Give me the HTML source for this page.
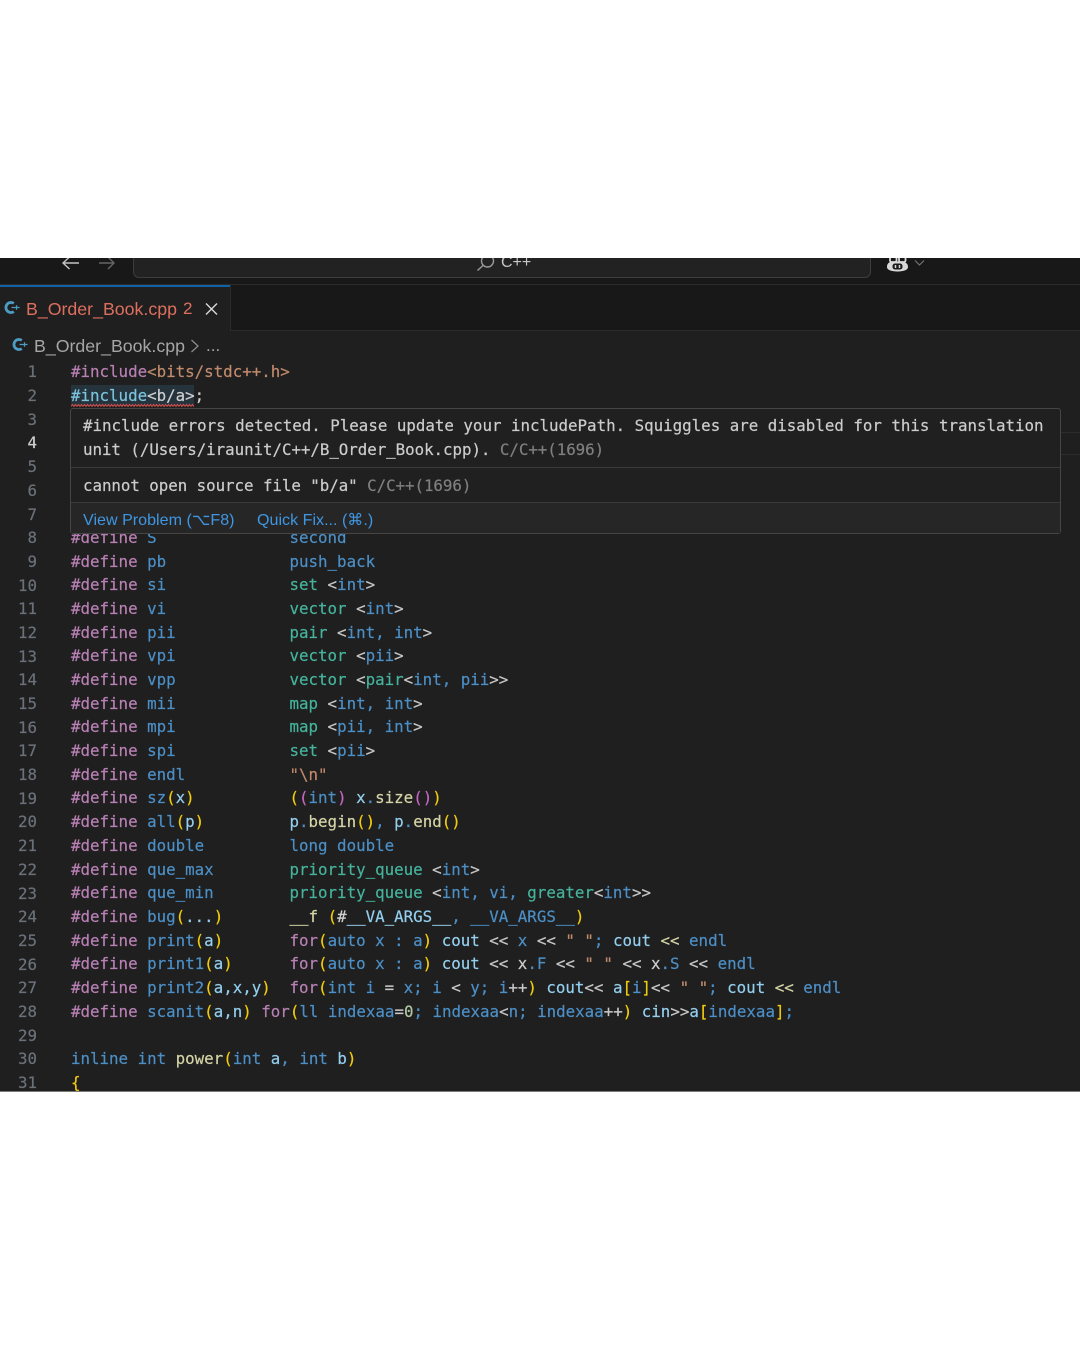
<!DOCTYPE html>
<html><head><meta charset="utf-8"><style>
html,body{margin:0;padding:0;background:#fff;width:1080px;height:1350px;overflow:hidden}
#p{position:relative;width:1080px;height:1350px;overflow:hidden;background:#fff}
#v{position:absolute;left:0;top:258px;width:1080px;height:833px;background:#1f1f1f;overflow:hidden;border-bottom:1px solid #7a7a7a}
.abs{position:absolute}
.code,.nums,.pop{font-family:"DejaVu Sans Mono","Liberation Mono",monospace;font-size:15.8px;-webkit-text-stroke:0.2px}
.code{position:absolute;left:71px;top:102.4px;line-height:23.68px;color:#c8c8c8}
.code div{height:23.68px;white-space:pre}
.nums{position:absolute;left:0;top:102.4px;width:37px;text-align:right;line-height:23.68px;color:#6b717a;white-space:pre}
.nums b{font-weight:normal;color:#d0d0d0}
.c1{display:inline-block;width:218.5px}
.k{color:#b880b4}.b{color:#4c8fc6}.t{color:#45b39c}.l{color:#93cfee}.y{color:#f2cc0c}.m{color:#c566c2}.s{color:#c08a6c}.f{color:#d4d4a6}.n{color:#b0c8a4}.w{color:#cfcfcf}
.sans{font-family:"Liberation Sans",Arial,sans-serif;white-space:pre}
.pop{position:absolute;left:70px;top:150px;width:989px;height:124px;background:#202020;border:1px solid #454545;border-radius:3px;color:#cccccc;line-height:24px;white-space:pre}
.pop .g{color:#7f7f7f}
.pop .ln{position:absolute;left:12px}
</style></head><body><div id="p"><div id="v">
<div class="abs" style="left:0;top:0;width:1080px;height:27px;background:#181818;border-bottom:1px solid #2b2b2b;box-sizing:border-box"></div>
<div class="abs" style="left:133px;top:-10px;width:736px;height:28px;background:#222;border:1px solid #3d3d3d;border-radius:6px"></div>
<svg class="abs" style="left:60px;top:-2px" width="60" height="18" fill="none" stroke-width="1.4"><path d="M3 7H19M9.5 1L3 7L9.5 13" stroke="#c4c4c4"/><path d="M39 7H54M48 1L54 7L48 13" stroke="#666"/></svg>
<svg class="abs" style="left:475px;top:-2px" width="24" height="18" fill="none" stroke="#9a9a9a" stroke-width="1.4"><circle cx="12.5" cy="5" r="6"/><path d="M8 9.5L2.5 14.5"/></svg>
<div class="abs sans" style="left:501px;top:-5px;font-size:16px;line-height:20px;color:#c8c8c8">C++</div>
<svg class="abs" style="left:885px;top:-4px" width="44" height="20" fill="none"><path d="M2 13C2 8.5 5 7 12 7.5C19 7 23 8.5 23 13C23 16.5 17 17.5 12.5 17.5C8 17.5 2 16.5 2 13Z" fill="#d8d8d8"/><rect x="5" y="2.5" width="6.5" height="5.5" rx="1.5" stroke="#d8d8d8" stroke-width="1.8"/><rect x="14" y="2.5" width="6.5" height="5.5" rx="1.5" stroke="#d8d8d8" stroke-width="1.8"/><rect x="7.5" y="9.5" width="10" height="6" rx="2.5" fill="#1a1a1a"/><path d="M10.5 11V14M14.5 11V14" stroke="#d8d8d8" stroke-width="1.5"/><path d="M30 6.5L34.5 11L39 6.5" stroke="#777" stroke-width="1.1"/></svg>
<div class="abs" style="left:0;top:27px;width:1080px;height:46px;background:#181818;border-bottom:1px solid #2b2b2b;box-sizing:border-box"></div>
<div class="abs" style="left:0;top:27px;width:231px;height:46px;background:#1f1f1f;border-right:1px solid #2b2b2b;box-sizing:border-box"></div>
<div class="abs" style="left:0;top:27px;height:2px;background:#0f62a6;width:230px"></div>
<svg class="abs" style="left:3px;top:42px" width="18" height="16" fill="none"><path d="M10.8 3.4A5 5 0 1 0 10.8 11.6" stroke="#4d9cc4" stroke-width="2.8"/><path d="M8.5 7.5H16.5M13.5 5.2V9.8" stroke="#4d9cc4" stroke-width="1.2"/></svg>
<div class="abs sans" style="left:26px;top:40px;font-size:17.75px;line-height:22px;color:#dd6f5f">B_Order_Book.cpp</div>
<div class="abs sans" style="left:183px;top:40px;font-size:17px;line-height:22px;color:#dd6f5f">2</div>
<svg class="abs" style="left:204px;top:44px" width="15" height="14" fill="none" stroke="#d8d8d8" stroke-width="1.4"><path d="M2 1.5L13 12.5M13 1.5L2 12.5"/></svg>
<svg class="abs" style="left:11px;top:79px" width="18" height="16" fill="none"><path d="M10.8 3.4A5 5 0 1 0 10.8 11.6" stroke="#4d9cc4" stroke-width="2.8"/><path d="M8.5 7.5H16.5M13.5 5.2V9.8" stroke="#4d9cc4" stroke-width="1.2"/></svg>
<div class="abs sans" style="left:34px;top:77.4px;font-size:17.75px;line-height:22px;color:#a6a6a6">B_Order_Book.cpp</div>
<svg class="abs" style="left:189px;top:80px" width="12" height="16" fill="none" stroke="#8f8f8f" stroke-width="1.2"><path d="M2.5 2L9 8L2.5 14"/></svg>
<div class="abs sans" style="left:206px;top:77.4px;font-size:17px;line-height:22px;color:#a6a6a6">...</div>
<div class="abs" style="left:1060px;top:174px;width:20px;height:21px;border-top:1px solid #2c2c2c;border-bottom:1px solid #2c2c2c"></div>
<div class="abs" style="left:71px;top:127px;width:123px;height:21px;background:#25333d"></div>
<div class="nums">1
2
3
<b>4</b>
5
6
7
8
9
10
11
12
13
14
15
16
17
18
19
20
21
22
23
24
25
26
27
28
29
30
31</div>
<div class="code">
<div><span class="k">#include</span><span class="s">&lt;bits/stdc++.h&gt;</span></div>
<div><span style="color:#7cc3dc">#include</span><span class="w">&lt;b/a&gt;;</span></div>
<div> </div><div> </div><div> </div><div> </div><div> </div>
<div><span class="c1"><span class="k">#define</span> <span class="b">S</span></span><span class="b">second</span></div>
<div><span class="c1"><span class="k">#define</span> <span class="b">pb</span></span><span class="b">push_back</span></div>
<div><span class="c1"><span class="k">#define</span> <span class="b">si</span></span><span class="t">set</span> &lt;<span class="b">int</span>&gt;</div>
<div><span class="c1"><span class="k">#define</span> <span class="b">vi</span></span><span class="t">vector</span> &lt;<span class="b">int</span>&gt;</div>
<div><span class="c1"><span class="k">#define</span> <span class="b">pii</span></span><span class="t">pair</span> &lt;<span class="b">int, int</span>&gt;</div>
<div><span class="c1"><span class="k">#define</span> <span class="b">vpi</span></span><span class="t">vector</span> &lt;<span class="b">pii</span>&gt;</div>
<div><span class="c1"><span class="k">#define</span> <span class="b">vpp</span></span><span class="t">vector</span> &lt;<span class="t">pair</span>&lt;<span class="b">int, pii</span>&gt;&gt;</div>
<div><span class="c1"><span class="k">#define</span> <span class="b">mii</span></span><span class="t">map</span> &lt;<span class="b">int, int</span>&gt;</div>
<div><span class="c1"><span class="k">#define</span> <span class="b">mpi</span></span><span class="t">map</span> &lt;<span class="b">pii, int</span>&gt;</div>
<div><span class="c1"><span class="k">#define</span> <span class="b">spi</span></span><span class="t">set</span> &lt;<span class="b">pii</span>&gt;</div>
<div><span class="c1"><span class="k">#define</span> <span class="b">endl</span></span><span class="s">"\n"</span></div>
<div><span class="c1"><span class="k">#define</span> <span class="b">sz</span><span class="y">(</span><span class="l">x</span><span class="y">)</span></span><span class="y">(</span><span class="m">(</span><span class="b">int</span><span class="m">)</span> <span class="l">x</span><span class="b">.</span><span class="f">size</span><span class="m">(</span><span class="m">)</span><span class="y">)</span></div>
<div><span class="c1"><span class="k">#define</span> <span class="b">all</span><span class="y">(</span><span class="l">p</span><span class="y">)</span></span><span class="l">p</span><span class="b">.</span><span class="f">begin</span><span class="y">()</span><span class="b">,</span> <span class="l">p</span><span class="b">.</span><span class="f">end</span><span class="y">()</span></div>
<div><span class="c1"><span class="k">#define</span> <span class="b">double</span></span><span class="b">long double</span></div>
<div><span class="c1"><span class="k">#define</span> <span class="b">que_max</span></span><span class="t">priority_queue</span> &lt;<span class="b">int</span>&gt;</div>
<div><span class="c1"><span class="k">#define</span> <span class="b">que_min</span></span><span class="t">priority_queue</span> &lt;<span class="b">int, vi,</span> <span class="t">greater</span>&lt;<span class="b">int</span>&gt;&gt;</div>
<div><span class="c1"><span class="k">#define</span> <span class="b">bug</span><span class="y">(</span><span class="l">...</span><span class="y">)</span></span><span class="f">__f</span> <span class="y">(</span><span class="w">#</span><span class="l">__VA_ARGS__</span><span class="b">, __VA_ARGS__</span><span class="y">)</span></div>
<div><span class="c1"><span class="k">#define</span> <span class="b">print</span><span class="y">(</span><span class="l">a</span><span class="y">)</span></span><span class="k">for</span><span class="y">(</span><span class="b">auto x : a</span><span class="y">)</span> <span class="l">cout</span> &lt;&lt; <span class="b">x</span> &lt;&lt; <span class="s">" "</span><span class="b">;</span> <span class="l">cout</span> <span class="f">&lt;&lt;</span> <span class="b">endl</span></div>
<div><span class="c1"><span class="k">#define</span> <span class="b">print1</span><span class="y">(</span><span class="l">a</span><span class="y">)</span></span><span class="k">for</span><span class="y">(</span><span class="b">auto x : a</span><span class="y">)</span> <span class="l">cout</span> &lt;&lt; <span class="w">x</span><span class="b">.F</span> &lt;&lt; <span class="s">" "</span> &lt;&lt; <span class="w">x</span><span class="b">.S</span> &lt;&lt; <span class="b">endl</span></div>
<div><span class="c1"><span class="k">#define</span> <span class="b">print2</span><span class="y">(</span><span class="l">a,x,y</span><span class="y">)</span></span><span class="k">for</span><span class="y">(</span><span class="b">int i</span> = <span class="b">x; i</span> &lt; <span class="b">y; i</span>++<span class="y">)</span> <span class="l">cout</span>&lt;&lt; <span class="l">a</span><span class="y">[</span><span class="b">i</span><span class="y">]</span>&lt;&lt; <span class="s">" "</span><span class="b">;</span> <span class="l">cout</span> <span class="f">&lt;&lt;</span> <span class="b">endl</span></div>
<div><span class="k">#define</span> <span class="b">scanit</span><span class="y">(</span><span class="l">a,n</span><span class="y">)</span> <span class="k">for</span><span class="y">(</span><span class="b">ll indexaa</span>=<span class="n">0</span><span class="b">; indexaa</span>&lt;<span class="b">n; indexaa</span>++<span class="y">)</span> <span class="l">cin</span>&gt;&gt;<span class="l">a</span><span class="y">[</span><span class="b">indexaa</span><span class="y">]</span><span class="b">;</span></div>
<div> </div>
<div><span class="b">inline int</span> <span class="f">power</span><span class="y">(</span><span class="b">int</span> <span class="l">a</span><span class="b">,</span> <span class="b">int</span> <span class="l">b</span><span class="y">)</span></div>
<div><span class="y">{</span></div>
</div>
<svg class="abs" style="left:71px;top:145px" width="123" height="5"><defs><pattern id="w" width="6" height="5" patternUnits="userSpaceOnUse"><path d="M0 3.5L1.5 1.5L3 3.5L4.5 1.5L6 3.5" fill="none" stroke="#d8504a" stroke-width="1"/></pattern></defs><rect width="123" height="5" fill="url(#w)"/></svg>
<div class="pop">
<div class="ln" style="top:5px">#include errors detected. Please update your includePath. Squiggles are disabled for this translation</div>
<div class="ln" style="top:29px;letter-spacing:-0.036px">unit (/Users/iraunit/C++/B_Order_Book.cpp). <span class="g">C/C++(1696)</span></div>
<div class="abs" style="left:0;top:58px;width:989px;height:1px;background:#3a3a3a"></div>
<div class="ln" style="top:64.5px;letter-spacing:-0.04px">cannot open source file "b/a" <span class="g">C/C++(1696)</span></div>
<div class="abs" style="left:0;top:93px;width:989px;height:31px;background:#262626;border-top:1px solid #3a3a3a;box-sizing:border-box"></div>
<div class="abs sans" style="left:12px;top:101px;font-size:16.1px;line-height:20px;color:#3f96e2;-webkit-text-stroke:0">View Problem (⌥F8)</div>
<div class="abs sans" style="left:186px;top:101px;font-size:16.1px;line-height:20px;color:#3f96e2;-webkit-text-stroke:0">Quick Fix... (⌘.)</div>
</div>
</div></div></body></html>
